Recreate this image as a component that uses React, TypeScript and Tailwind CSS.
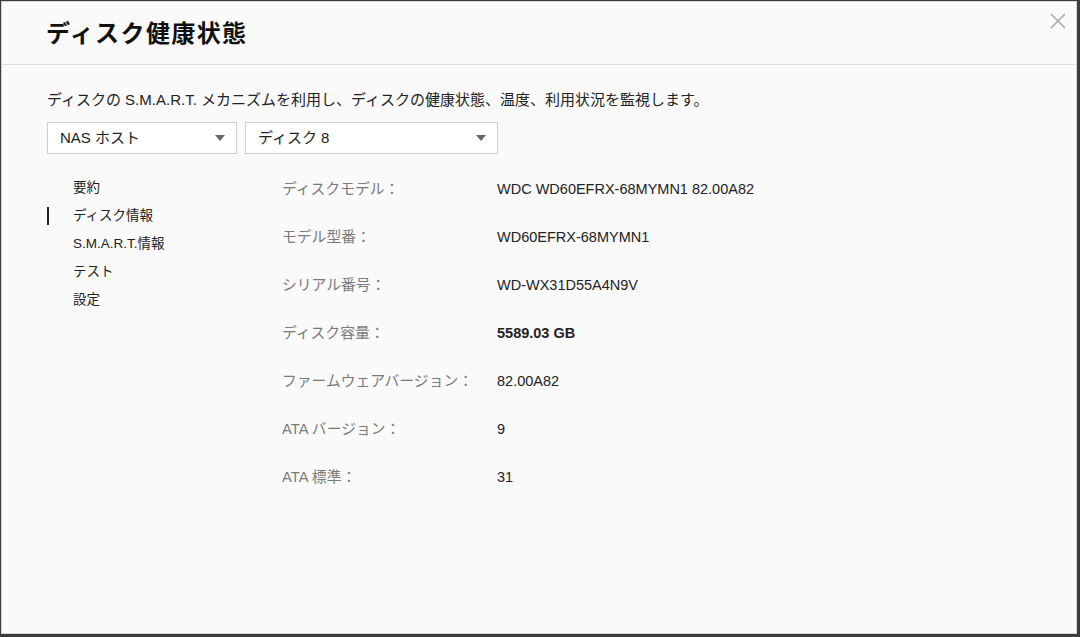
import React from "react";

const FONT = '"Liberation Sans", "Noto Sans CJK JP", sans-serif';

const navItems = ["要約", "ディスク情報", "S.M.A.R.T.情報", "テスト", "設定"];

const rows: { label: string; value: string; bold?: boolean }[] = [
    {label: "ディスクモデル：", value: "WDC WD60EFRX-68MYMN1 82.00A82"},
    {label: "モデル型番：", value: "WD60EFRX-68MYMN1"},
    {label: "シリアル番号：", value: "WD-WX31D55A4N9V"},
    {label: "ディスク容量：", value: "5589.03 GB", bold: true},
    {label: "ファームウェアバージョン：", value: "82.00A82"},
    {label: "ATA バージョン：", value: "9"},
    {label: "ATA 標準：", value: "31"},
];

function Select({label, width}: { label: string; width: string }) {
    return (
        <div className={`${width} h-[32px] bg-white border border-[#cfcfcf] flex items-center justify-between pl-[12px] pr-[11px]`}>
            <span className="text-[15px] text-[#222]">{label}</span>
            <svg width="10" height="6" viewBox="0 0 10 6">
                <path d="M0 0 L10 0 L5 6 Z" fill="#666"/>
            </svg>
        </div>
    );
}

export default function App() {
    const activeNav = 1;

    return (
        <div className="w-[1080px] h-[637px] bg-[#3c3c3c] pt-[1px] pl-[1px] pr-[3px] pb-[3px]" style={{fontFamily: FONT}}>
            <div className="w-full h-full bg-[#fafafa] border border-[#d4d4d4] flex flex-col">
                {/* header */}
                <div className="h-[63px] border-b border-[#dedede] flex items-center justify-between pl-[44px] pr-[12px] pt-[2px] relative">
                    <h1 className="text-[24px] font-bold text-[#111] tracking-[1.4px]">ディスク健康状態</h1>
                    <svg className="absolute right-[10px] top-[11px]" width="16" height="16" viewBox="0 0 16 16">
                        <path d="M1 1 L15 15 M15 1 L1 15" stroke="#aaa" strokeWidth="1.6"/>
                    </svg>
                </div>

                <div className="pl-[45px] pt-[25px] flex flex-col">
                    <p className="text-[15px] leading-[20px] text-[#222]">
                        ディスクの S.M.A.R.T. メカニズムを利用し、ディスクの健康状態、温度、利用状況を監視します。
                    </p>

                    <div className="flex gap-[8px] mt-[12px]">
                        <Select label="NAS ホスト" width="w-[190px]"/>
                        <Select label="ディスク 8" width="w-[253px]"/>
                    </div>

                    <div className="flex mt-[20px]">
                        {/* side nav */}
                        <ul className="w-[235px] shrink-0 flex flex-col">
                            {navItems.map((item, i) => (
                                <li key={item} className="h-[28px] flex items-center relative pl-[26px] text-[13.5px] text-[#222]">
                                    {i === activeNav && (
                                        <span className="absolute left-0 top-[5px] w-[2px] h-[18px] bg-[#222]"/>
                                    )}
                                    {item}
                                </li>
                            ))}
                        </ul>

                        {/* detail rows */}
                        <div className="flex flex-col">
                            {rows.map((row) => (
                                <div key={row.label} className="h-[48px] flex items-start pt-[5px] leading-[20px]">
                                    <span className="w-[215px] text-[14.8px] text-[#7a7a7a]">{row.label}</span>
                                    <span className={`text-[14.5px] text-[#222] ${row.bold ? "font-bold" : ""}`}>{row.value}</span>
                                </div>
                            ))}
                        </div>
                    </div>
                </div>
            </div>
        </div>
    );
}
